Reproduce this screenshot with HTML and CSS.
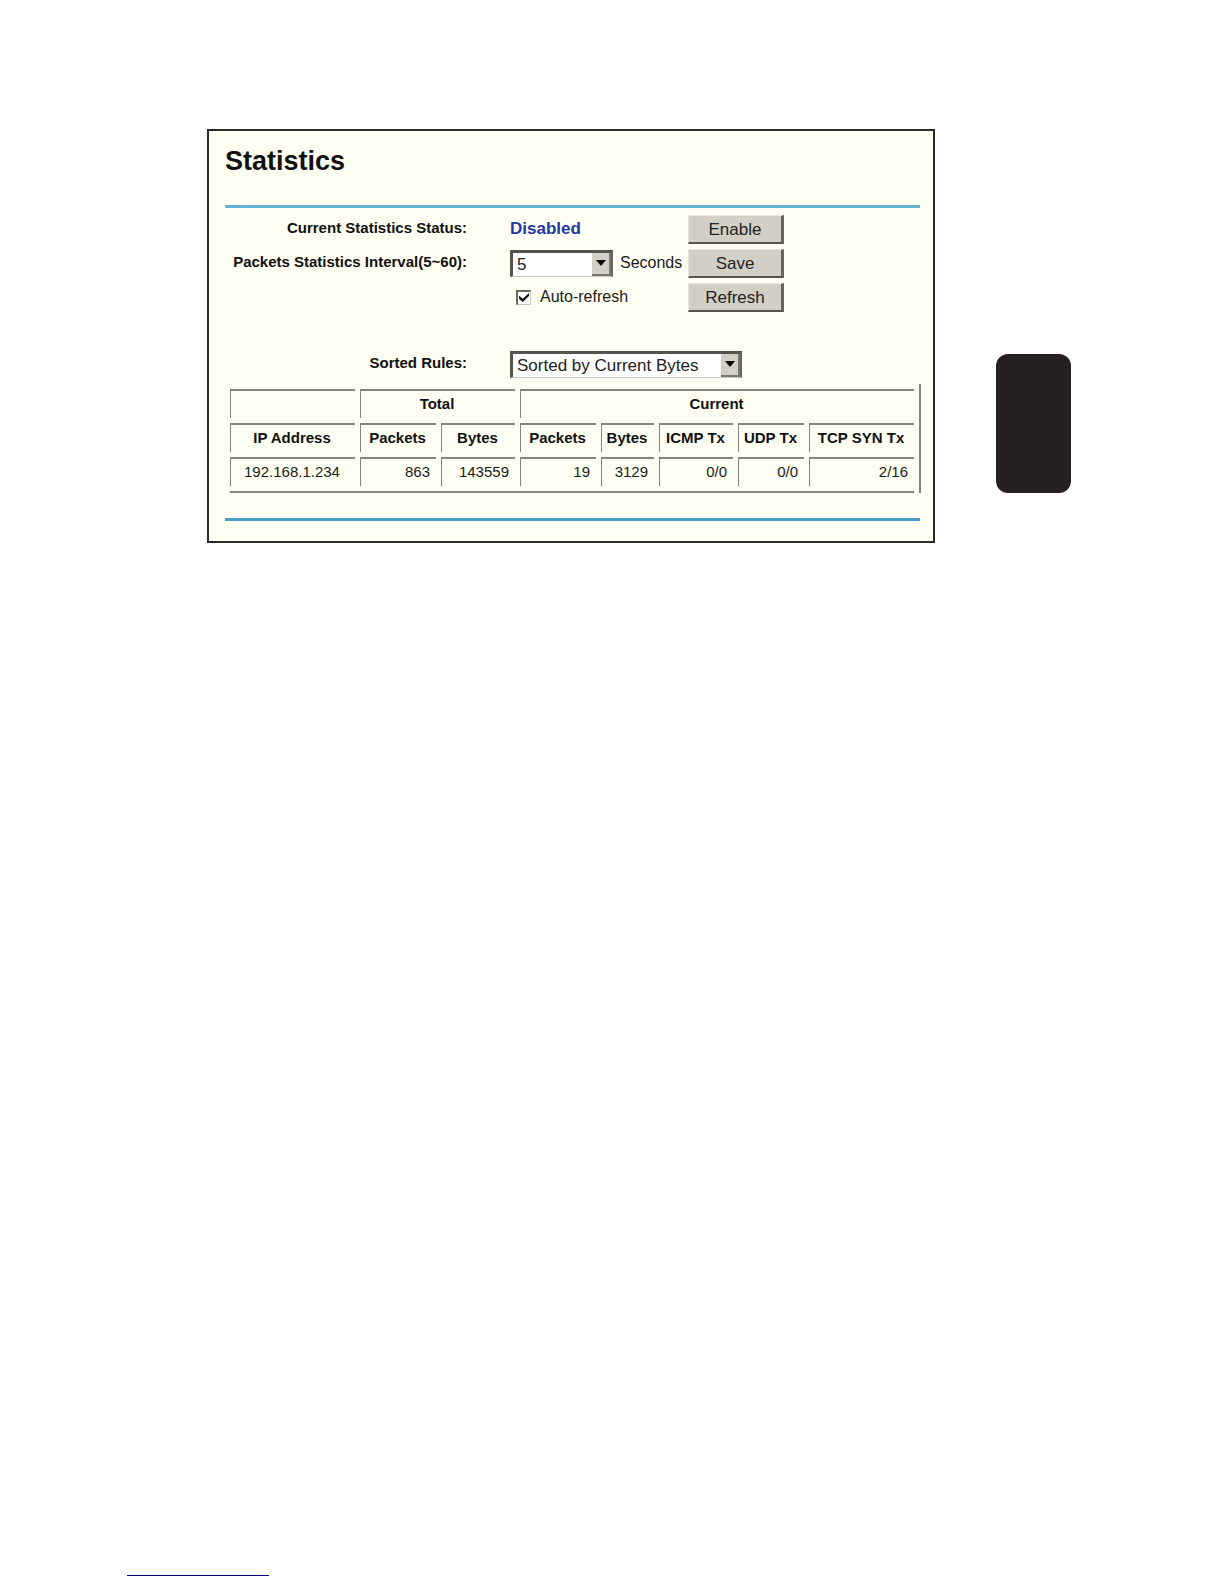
FILE: index.html
```
<!DOCTYPE html>
<html lang="en">

<head>
    <meta charset="UTF-8">
    <meta name="viewport" content="width=device-width, initial-scale=1.0">
    <title>Statistics</title>
    <link rel="stylesheet" href="styles.css">
</head>

<body>
    <main class="content">
        <section class="panel">
            <h1>Statistics</h1>
            <hr>
            <form class="settings">
                <span class="label">Current Statistics Status:</span>
                <span class="status">Disabled</span>
                <button type="button" class="btn">Enable</button>

                <label class="label" for="interval">Packets Statistics Interval(5~60):</label>
                <div class="field">
                    <span class="select-box interval">
                        <select id="interval">
                            <option>5</option>
                            <option>10</option>
                            <option>30</option>
                            <option>60</option>
                        </select>
                        <span class="arrow"><svg width="10" height="6" viewBox="0 0 10 6"><path d="M0 0h10L5 6z"/></svg></span>
                    </span>
                    <span>Seconds</span>
                </div>
                <button type="button" class="btn">Save</button>

                <div class="field check">
                    <input type="checkbox" id="refresh" checked>
                    <label for="refresh">Auto-refresh</label>
                </div>
                <button type="button" class="btn">Refresh</button>

                <label class="label sorted" for="sort">Sorted Rules:</label>
                <div class="field sorted wide">
                    <span class="select-box sort">
                        <select id="sort">
                            <option>Sorted by Current Bytes</option>
                            <option>Sorted by IP Address</option>
                        </select>
                        <span class="arrow"><svg width="10" height="6" viewBox="0 0 10 6"><path d="M0 0h10L5 6z"/></svg></span>
                    </span>
                </div>
            </form>

            <table class="stats">
                <colgroup>
                    <col class="col-ip">
                    <col class="col-packets">
                    <col class="col-total">
                    <col class="col-packets">
                    <col class="col-bytes">
                    <col class="col-icmp">
                    <col class="col-udp">
                    <col class="col-tcp">
                </colgroup>
                <thead>
                    <tr>
                        <th></th>
                        <th colspan="2">Total</th>
                        <th colspan="5">Current</th>
                    </tr>
                    <tr>
                        <th>IP Address</th>
                        <th>Packets</th>
                        <th>Bytes</th>
                        <th>Packets</th>
                        <th>Bytes</th>
                        <th>ICMP Tx</th>
                        <th>UDP Tx</th>
                        <th>TCP SYN Tx</th>
                    </tr>
                </thead>
                <tbody>
                    <tr>
                        <td class="ip">192.168.1.234</td>
                        <td>863</td>
                        <td>143559</td>
                        <td>19</td>
                        <td>3129</td>
                        <td>0/0</td>
                        <td>0/0</td>
                        <td>2/16</td>
                    </tr>
                </tbody>
            </table>
            <hr class="bottom">
        </section>
        <aside class="side-tab"></aside>
    </main>
    <footer class="footer">
        <div class="footer-line"></div>
    </footer>
</body>

</html>
```
FILE: styles.css
```
* {
    box-sizing: border-box;
}

body {
    margin: 0;
    min-height: 100vh;
    display: flex;
    flex-direction: column;
    background: #fff;
    color: #1a1a1a;
    font-family: "Liberation Sans", Arial, sans-serif;
    font-size: 16px;
}

.content {
    display: flex;
    align-items: flex-start;
    gap: 61px;
    padding: 129px 153px 40px 207px;
}

.panel {
    flex: 1;
    min-width: 0;
    padding: 14px 13px 20px 16px;
    border: 2px solid #2b2b2b;
    background: #fefff2;
}

h1 {
    margin: 0;
    color: #111;
    font-size: 27px;
    line-height: 32px;
}

hr {
    height: 3px;
    margin: 28px 0 4px;
    border: none;
    background: #62b2d4;
}

hr.bottom {
    margin: 25px 0 0;
    background: #479fc5;
}

.settings {
    display: grid;
    grid-template-columns: 242px 221px auto;
    grid-template-rows: repeat(3, 34px) 33px 34px;
    align-items: center;
    justify-content: start;
}

.label {
    padding-bottom: 3px;
    color: #111;
    font-size: 15px;
    font-weight: bold;
    text-align: right;
    white-space: nowrap;
}

.status,
.field {
    margin-left: 43px;
}

.status {
    color: #2637a3;
    font-size: 17px;
    font-weight: bold;
}

.field {
    display: flex;
    align-items: center;
    gap: 7px;
}

.check {
    grid-column: 2;
    gap: 9px;
    padding-left: 6px;
}

.sorted {
    grid-row: 5;
}

.wide {
    grid-column: 2 / 4;
}

.btn {
    width: 96px;
    height: 29px;
    padding: 2px 0 0;
    border: 1px solid #e8e6dc;
    border-right: 3px solid #66655e;
    border-bottom: 2px solid #55544e;
    background: #d2cfc4;
    color: #222;
    font-family: inherit;
    font-size: 17px;
}

/* drop-downs */
.select-box {
    position: relative;
    height: 27px;
    border: 1px solid #c8c8c0;
    border-top: 3px solid #55554f;
    border-left: 3px solid #55554f;
    border-right: 2px solid #66665f;
    background: #fff;
}

.interval {
    width: 103px;
}

.sort {
    width: 232px;
}

.select-box select {
    appearance: none;
    display: block;
    width: 100%;
    height: 100%;
    padding: 0 20px 0 4px;
    border: none;
    background: transparent;
    color: #222;
    font-family: inherit;
    font-size: 17px;
}

.arrow {
    position: absolute;
    top: 0;
    right: 0;
    bottom: 0;
    width: 19px;
    display: flex;
    align-items: center;
    justify-content: center;
    border-right: 2px solid #77776f;
    border-bottom: 2px solid #77776f;
    background: #d2cfc4;
    pointer-events: none;
}

.check input {
    appearance: none;
    width: 15px;
    height: 15px;
    margin: 0;
    border: 1px solid #c8c8c0;
    border-top: 2px solid #66665f;
    border-left: 2px solid #66665f;
    background: #fff;
    display: grid;
    place-items: center;
}

.check input:checked::before {
    content: "";
    width: 10px;
    height: 9px;
    background: #111;
    clip-path: polygon(0 30%, 38% 65%, 100% 0, 100% 32%, 38% 100%, 0 65%);
}

/* results table */
.stats {
    width: 100%;
    margin-top: 3px;
    padding-bottom: 2px;
    table-layout: fixed;
    border-collapse: separate;
    border-spacing: 5px;
    border-right: 2px solid #85857d;
    background: linear-gradient(#85857d, #85857d) 5px 100% / calc(100% - 10px) 2px no-repeat;
}

.stats th,
.stats td {
    height: 29px;
    padding: 0 6px 2px 4px;
    border-top: 2px solid #85857d;
    border-left: 1px solid #85857d;
    font-size: 15px;
    white-space: nowrap;
}

.stats th {
    padding: 0 2px 2px 0;
    color: #111;
}

.stats td {
    text-align: right;
}

.stats td.ip {
    padding: 0 2px 2px 0;
    text-align: center;
}

.col-ip { width: 125px; }
.col-packets { width: 76px; }
.col-total { width: 74px; }
.col-bytes { width: 53px; }
.col-icmp { width: 74px; }
.col-udp { width: 66px; }
.col-tcp { width: 105px; }

.side-tab {
    width: 75px;
    height: 139px;
    margin-top: 225px;
    border-radius: 12px;
    background: #252122;
}

.footer {
    margin-top: auto;
    padding: 0 127px 8px;
}

.footer-line {
    width: 142px;
    height: 1px;
    background: #00007f;
}
```
